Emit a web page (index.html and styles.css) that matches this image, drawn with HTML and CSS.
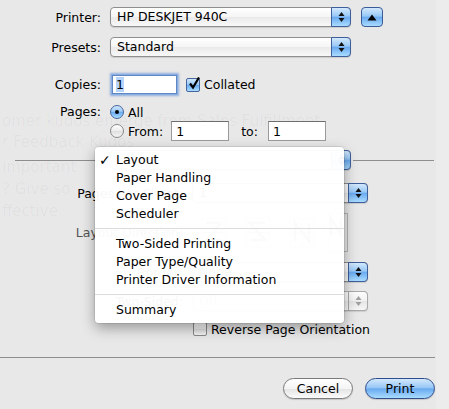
FILE: index.html
```html
<!DOCTYPE html>
<html lang="en">
<head>
    <meta charset="UTF-8">
    <title>Print</title>
    <link rel="stylesheet" href="styles.css">
</head>
<body>

<div class="sheet">
    <!-- window behind the sheet, showing through -->
    <div class="ghost">
        <p class="g1">omer kudos emerge from Sales Fulfillment</p>
        <p class="g2">r Feedback Kudos</p>
        <p class="g3">important</p>
        <p class="g4">? Give so</p>
        <p class="g5">ffective</p>
    </div>

    <div class="row">
        <span class="lbl">Printer:</span>
        <div class="popup popup-wide">
            <span class="popup-text">HP DESKJET 940C</span>
            <span class="arrows"><svg width="7" height="12" viewBox="0 0 7 12"><path d="M3.5 1 L6.5 5 L0.5 5 Z M0.5 7 L6.5 7 L3.5 11 Z"/></svg></span>
        </div>
        <button class="disclose"><svg width="10" height="7" viewBox="0 0 10 7"><path d="M5 0.5 L9.5 6.5 L0.5 6.5 Z"/></svg></button>
    </div>

    <div class="row row-presets">
        <span class="lbl">Presets:</span>
        <div class="popup popup-wide">
            <span class="popup-text">Standard</span>
            <span class="arrows"><svg width="7" height="12" viewBox="0 0 7 12"><path d="M3.5 1 L6.5 5 L0.5 5 Z M0.5 7 L6.5 7 L3.5 11 Z"/></svg></span>
        </div>
    </div>

    <div class="row row-copies">
        <span class="lbl">Copies:</span>
        <div class="field field-copies focused"><span class="sel">1</span></div>
        <span class="check checked"><svg width="14" height="14" viewBox="0 0 14 14"><path d="M3 6.5 L6 10.5 L12 0.5" fill="none" stroke="#000" stroke-width="2.2"/></svg></span>
        <span class="opt">Collated</span>
    </div>

    <div class="row row-pages">
        <span class="lbl">Pages:</span>
        <div class="pages">
            <div class="line">
                <span class="radio on"></span><span class="opt">All</span>
            </div>
            <div class="line line-range">
                <span class="radio"></span><span class="opt">From:</span>
                <div class="field field-range">1</div>
                <span class="to">to:</span>
                <div class="field field-range">1</div>
            </div>
        </div>
    </div>

    <div class="pane-bar">
        <span class="rule rule-left"></span>
        <div class="popup popup-wide">
            <span class="popup-text">Layout</span>
            <span class="arrows"><svg width="7" height="12" viewBox="0 0 7 12"><path d="M3.5 1 L6.5 5 L0.5 5 Z M0.5 7 L6.5 7 L3.5 11 Z"/></svg></span>
        </div>
        <span class="rule"></span>
    </div>

    <div class="pane">
        <div class="prow prow-first">
            <span class="plbl">Pages per Sheet:</span>
            <div class="popup popup-pane">
                <span class="popup-text">1</span>
                <span class="arrows"><svg width="7" height="12" viewBox="0 0 7 12"><path d="M3.5 1 L6.5 5 L0.5 5 Z M0.5 7 L6.5 7 L3.5 11 Z"/></svg></span>
            </div>
        </div>
        <div class="prow prow-dir">
            <span class="plbl plbl-dim">Layout Direction:</span>
            <div class="dirs">
                <span class="dir"><svg width="44" height="39" viewBox="0 0 44 39"><rect x="10" y="5" width="24" height="29" fill="none" stroke="#aaa"/><path d="M22 5 V34 M10 19.5 H34" stroke="#aaa"/><path d="M14 10 H29 L14 27 H29" fill="none" stroke="#888" stroke-width="2.5"/></svg></span>
                <span class="dir"><svg width="44" height="39" viewBox="0 0 44 39"><rect x="10" y="5" width="24" height="29" fill="none" stroke="#aaa"/><path d="M22 5 V34 M10 19.5 H34" stroke="#aaa"/><path d="M29 10 H14 L29 27 H14" fill="none" stroke="#888" stroke-width="2.5"/></svg></span>
                <span class="dir"><svg width="44" height="39" viewBox="0 0 44 39"><rect x="10" y="5" width="24" height="29" fill="none" stroke="#aaa"/><path d="M22 5 V34 M10 19.5 H34" stroke="#aaa"/><path d="M15 28 V10 L29 28 V10" fill="none" stroke="#888" stroke-width="2.5"/></svg></span>
                <span class="dir"><svg width="24" height="39" viewBox="0 0 24 39"><rect x="0.5" y="0.5" width="23" height="38" fill="none" stroke="#b4b4b4"/><path d="M5.5 1 V38 M17.5 1 V38 M5.5 19.5 H17.5" stroke="#b4b4b4"/><path d="M7 22 V5 L17 22 V5" fill="none" stroke="#888" stroke-width="2.5"/></svg></span>
            </div>
        </div>
        <div class="prow prow-border">
            <span class="plbl">Border:</span>
            <div class="popup popup-pane">
                <span class="popup-text">None</span>
                <span class="arrows"><svg width="7" height="12" viewBox="0 0 7 12"><path d="M3.5 1 L6.5 5 L0.5 5 Z M0.5 7 L6.5 7 L3.5 11 Z"/></svg></span>
            </div>
        </div>
        <div class="prow prow-twosided">
            <span class="plbl">Two-Sided:</span>
            <div class="popup popup-pane disabled">
                <span class="popup-text">Off</span>
                <span class="arrows"><svg width="7" height="12" viewBox="0 0 7 12"><path d="M3.5 1 L6.5 5 L0.5 5 Z M0.5 7 L6.5 7 L3.5 11 Z"/></svg></span>
            </div>
        </div>
        <div class="prow prow-reverse">
            <span class="plbl"></span>
            <span class="check"></span>
            <span class="opt">Reverse Page Orientation</span>
        </div>
    </div>

    <div class="footer-rule"></div>

    <div class="buttons">
        <button class="btn">Cancel</button>
        <button class="btn btn-default">Print</button>
    </div>

    <!-- pane menu, opened from the Layout popup -->
    <ul class="menu">
        <li class="item"><span class="tick">✓</span>Layout</li>
        <li class="item">Paper Handling</li>
        <li class="item">Cover Page</li>
        <li class="item">Scheduler</li>
        <li class="menu-sep"></li>
        <li class="item">Two-Sided Printing</li>
        <li class="item">Paper Type/Quality</li>
        <li class="item">Printer Driver Information</li>
        <li class="menu-sep"></li>
        <li class="item">Summary</li>
    </ul>
</div>

</body>
</html>
```

FILE: styles.css
```css
* {
    margin: 0;
    padding: 0;
    box-sizing: border-box;
}

body, html {
    width: 100%;
    height: 100%;
    overflow: hidden;
}

body {
    font-family: "DejaVu Sans", "Lucida Grande", sans-serif;
    font-size: 12.5px;
    color: #000;
    background: linear-gradient(to right, #e8e8e8 436px, #ececec 436px);
}

.sheet {
    position: relative;
    height: 409px;
    padding-top: 7px;
}

/* Faint text of the document window behind */
.ghost {
    position: absolute;
    left: 0;
    top: 0;
    font-size: 15px;
    color: rgba(0, 0, 0, 0.04);
    white-space: nowrap;
}

.ghost p {
    position: absolute;
    left: 2px;
}

.g1 { top: 112px; }
.g2 { top: 133px; }
.g3 { top: 158px; }
.g4 { top: 180px; }
.g5 { top: 202px; }

.row {
    position: relative;
    display: flex;
    align-items: center;
    height: 20px;
}

.lbl {
    width: 101px;
    margin-right: 9px;
    text-align: right;
}

.row-presets {
    margin-top: 10px;
}

.row-copies {
    margin-top: 16px;
    height: 23px;
}

.row-pages {
    margin-top: 8px;
    height: auto;
    align-items: flex-start;
}

.row-pages .lbl {
    line-height: 16px;
}

/* Popup buttons */
.popup {
    display: flex;
    height: 20px;
    border: 1px solid #8e8e8e;
    border-radius: 4px;
    background: linear-gradient(#ffffff, #f5f5f5 50%, #eaeaea 52%, #f8f8f8);
    box-shadow: 0 1px 1px rgba(0, 0, 0, 0.12);
}

.popup-wide {
    width: 241px;
}

.popup-pane {
    width: 176px;
}

.popup-text {
    flex: 1;
    padding-left: 6px;
    line-height: 18px;
    white-space: nowrap;
    overflow: hidden;
}

.arrows {
    display: flex;
    align-items: center;
    justify-content: center;
    width: 20px;
    margin: -1px -1px -1px 0;
    border: 1px solid #3f5f9c;
    border-radius: 0 4px 4px 0;
    background: linear-gradient(#d3e8fc, #98c8f6 45%, #6aaaf0 52%, #a9dcff);
}

.arrows svg {
    fill: #111;
}

.disabled .arrows {
    border-color: #a9a9a9;
    background: linear-gradient(#fdfdfd, #f1f1f1 50%, #e6e6e6 52%, #f6f6f6);
}

.disabled .arrows svg {
    fill: #a0a0a0;
}

.disabled .popup-text {
    color: #999;
}

.disabled {
    border-color: #b0b0b0;
}

.disclose {
    display: flex;
    align-items: center;
    justify-content: center;
    width: 22px;
    height: 20px;
    margin-left: 10px;
    border: 1px solid #3b5b98;
    border-radius: 4px;
    background: linear-gradient(#d3e8fc, #98c8f6 45%, #6aaaf0 52%, #a9dcff);
}

.disclose svg {
    fill: #000;
}

/* Text fields */
.field {
    height: 20px;
    padding-left: 4px;
    line-height: 19px;
    background: #fff;
    border: 1px solid #9a9a9a;
    border-top-color: #6e6e6e;
}

.field-copies {
    width: 65px;
    height: 19px;
    margin-left: 2px;
    line-height: 17px;
    padding-left: 3px;
}

.focused {
    border-color: #5f87c4;
    box-shadow: 0 0 0 1px #88aee3, 0 0 2px 2px rgba(110, 150, 215, 0.7);
}

.sel {
    background: #b5d3fb;
}

.field-range {
    width: 58px;
}

/* Checkboxes and radios */
.check {
    display: block;
    width: 14px;
    height: 14px;
    border: 1px solid #8a8a8a;
    border-radius: 2px;
    background: linear-gradient(#ffffff, #ececec 50%, #e0e0e0 52%, #f5f5f5);
}

.check.checked {
    margin-left: 9px;
    border-color: #45659f;
    background: linear-gradient(#d3e8fc, #98c8f6 45%, #6aaaf0 52%, #a9dcff);
}

.check svg {
    display: block;
    margin: -2px 0 0 0;
}

.opt {
    margin-left: 4px;
}

.pages {
    display: flex;
    flex-direction: column;
}

.line {
    display: flex;
    align-items: center;
    height: 16px;
}

.line-range {
    height: 20px;
    margin-top: 1px;
}

.radio {
    display: block;
    width: 14px;
    height: 14px;
    border: 1px solid #8a8a8a;
    border-radius: 50%;
    background: linear-gradient(#ffffff, #ececec 50%, #e0e0e0 52%, #f5f5f5);
}

.radio.on {
    position: relative;
    border-color: #45659f;
    background: linear-gradient(#d3e8fc, #98c8f6 45%, #6aaaf0 52%, #a9dcff);
}

.radio.on::after {
    content: "";
    position: absolute;
    left: 4px;
    top: 4px;
    width: 4px;
    height: 4px;
    border-radius: 50%;
    background: #000;
}

.line-range .field:first-of-type {
    margin-left: 8px;
}

.to {
    margin-left: 12px;
    margin-right: 10px;
}

/* Pane selector sitting on the divider */
.pane-bar {
    display: flex;
    align-items: center;
    height: 20px;
    margin-top: 9px;
    padding: 0 15px;
}

.rule {
    flex: 1;
    height: 1px;
    margin-left: 2px;
    background: #8e8e8e;
}

.rule-left {
    flex: none;
    width: 93px;
    margin: 0 2px 0 0;
}

.pane {
    display: flex;
    flex-direction: column;
}

.prow {
    display: flex;
    align-items: center;
    height: 20px;
}

.plbl {
    width: 183px;
    margin-right: 9px;
    text-align: right;
    white-space: nowrap;
}

.plbl-dim {
    color: #555;
}

.prow-first {
    margin-top: 13px;
}

.prow-dir {
    margin-top: 10px;
    height: 39px;
}

.dirs {
    display: flex;
    width: 176px;
    height: 39px;
}

.dir svg {
    display: block;
}

.prow-border {
    margin-top: 10px;
}

.prow-twosided {
    margin-top: 9px;
}

.prow-reverse {
    margin-top: 11px;
    height: 14px;
}

.prow-reverse .check {
    margin-left: 1px;
}

.footer-rule {
    width: 435px;
    height: 1px;
    margin-top: 21px;
    background: #8e8e8e;
}

.buttons {
    display: flex;
    justify-content: flex-end;
    gap: 12px;
    margin-top: 20px;
    padding-right: 14px;
}

.btn {
    width: 70px;
    height: 21px;
    font: inherit;
    color: #000;
    border: 1px solid #7a7a7a;
    border-radius: 11px;
    background: linear-gradient(#ffffff, #f4f4f4 50%, #e4e4e4 52%, #fbfbfb);
    box-shadow: 0 1px 1px rgba(0, 0, 0, 0.15);
}

.btn-default {
    border-color: #2f4e8d;
    background: linear-gradient(#d3e8fc, #98c8f6 45%, #6aaaf0 52%, #a9dcff);
}

/* Open pop-up menu */
.menu {
    position: absolute;
    left: 95px;
    top: 147px;
    width: 249px;
    padding: 4px 0;
    list-style: none;
    background: rgba(255, 255, 255, 0.97);
    border-radius: 4px;
    box-shadow: 0 5px 14px rgba(0, 0, 0, 0.35), 0 0 0 1px rgba(0, 0, 0, 0.08);
}

.item {
    position: relative;
    height: 18px;
    padding-left: 21px;
    line-height: 18px;
    white-space: nowrap;
}

.tick {
    position: absolute;
    left: 4px;
    top: 0;
    font-size: 14px;
    font-weight: bold;
}

.menu-sep {
    height: 12px;
    padding-top: 5px;
}

.menu-sep::before {
    content: "";
    display: block;
    height: 1px;
    background: #dcdcdc;
}
```
